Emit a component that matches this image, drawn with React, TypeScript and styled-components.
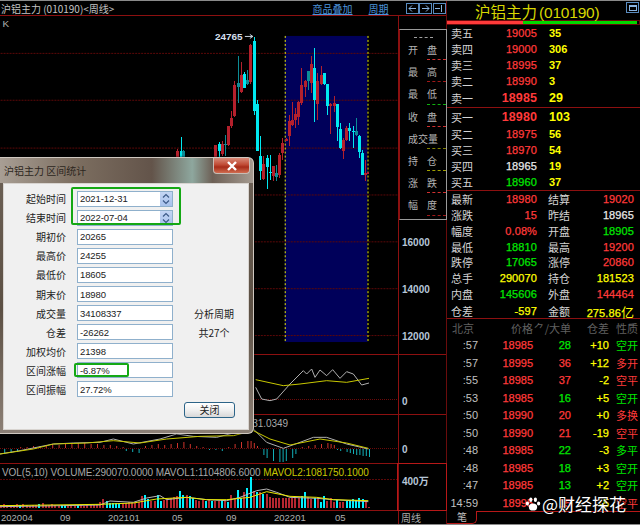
import React from 'react';
import styled, { createGlobalStyle } from 'styled-components';

const GlobalStyle = createGlobalStyle`
  html, body {
    margin: 0;
    padding: 0;
    background: #000;
    overflow: hidden;
  }
  * {
    box-sizing: border-box;
  }
`;

const CJK = `"Noto Sans CJK SC", "Liberation Sans", sans-serif`;
const NUM = `"Liberation Sans", "Noto Sans CJK SC", sans-serif`;

const RED = '#ff3a3a';
const GREEN = '#00e600';
const YELLOW = '#ffff00';
const WHITE = '#e8e8e8';
const LINE = '#8c1010';

type Tone = 'r' | 'g' | 'y' | 'w';
const toneColor = { r: RED, g: GREEN, y: YELLOW, w: WHITE };

const Page = styled.div`
  position: relative;
  width: 640px;
  height: 525px;
  display: flex;
  background: #000;
  border-top: 1px solid #8a8a8a;
  border-bottom: 1px solid #8a8a8a;
  overflow: hidden;
  font-family: ${NUM};
`;

const LeftPane = styled.div`
  width: 446px;
  flex: none;
  display: flex;
  flex-direction: column;
`;

const TitleBar = styled.div`
  height: 15px;
  flex: none;
  display: flex;
  align-items: center;
  padding-left: 1px;
  border-bottom: 1px solid ${LINE};
  font: 10px ${CJK};
  color: #c4c4c4;
  white-space: nowrap;
`;

const TitleLinks = styled.div`
  margin-left: auto;
  display: flex;
  align-items: center;
  color: #4c94dc;
  text-decoration: underline;
`;

const LinkText = styled.span<{ $gap: number }>`
  margin-right: ${p => p.$gap}px;
`;

const NavButton = styled.div`
  width: 13px;
  height: 11px;
  border: 1px solid #5a8cc0;
  color: #8ab4e0;
  display: flex;
  align-items: center;
  justify-content: center;
  margin-right: 0.5px;
`;

const ChartRow = styled.div<{ $h: number }>`
  position: relative;
  height: ${p => p.$h}px;
  flex: none;
  display: flex;
  border-bottom: 1px solid ${LINE};
`;

const Plot = styled.svg`
  width: 398px;
  height: 100%;
  flex: none;
  display: block;
`;

const AxisCell = styled.div<{ $top: number; $strong?: boolean }>`
  flex: 1;
  padding: ${p => p.$top}px 0 0 3px;
  border-left: 1px solid ${LINE};
  outline: ${p => (p.$strong ? '1px solid #b81818' : 'none')};
  font: 10px ${NUM};
  color: #b6c6d8;
`;

const AxisLabel = styled.div<{ $pitch: number }>`
  height: ${p => p.$pitch}px;
  line-height: 14px;
  font-weight: bold;
`;

const Legend = styled.div<{ $width?: number }>`
  position: absolute;
  top: 3px;
  left: 2px;
  width: ${p => (p.$width ? `${p.$width}px` : 'auto')};
  font: 10px ${NUM};
  letter-spacing: -0.05px;
  color: #a8a8a8;
  white-space: nowrap;
  text-align: right;
`;

const LegendOlive = styled.span`
  color: #c8c800;
`;

const DateRow = styled.div`
  flex: 1;
  display: flex;
`;

const DateSvg = styled.svg`
  width: 398px;
  height: 100%;
  display: block;
`;

const PeriodCell = styled.div`
  flex: 1;
  padding-left: 2px;
  border-left: 1px solid ${LINE};
  font: 10px/13px ${CJK};
  color: #b0b0b0;
`;

/* ohlc side panel over the price axis */
const InfoPanel = styled.div`
  position: absolute;
  left: 399px;
  top: 28px;
  width: 48px;
  height: 191px;
  padding-top: 7px;
  background: #000;
  border: 1px solid #9a9a9a;
  border-left-color: ${LINE};
`;

const InfoDash = styled.div`
  width: 19px;
  height: 1px;
  margin: 0 0 0 14px;
  border-top: 1px dashed #a0a0a0;
`;

const InfoRow = styled.div<{ $line: string }>`
  position: relative;
  height: 22.2px;
  padding: 6px 9px 0 8px;
  display: flex;
  justify-content: space-between;
  font: 10px/12px ${CJK};
  color: #b4b4b4;

  &::after {
    content: '';
    position: absolute;
    left: 27px;
    right: 0;
    bottom: 0;
    border-bottom: 1px dashed ${p => p.$line};
  }
`;

const Dialog = styled.div`
  position: absolute;
  left: 0;
  top: 156px;
  width: 254px;
  height: 277px;
  display: flex;
  flex-direction: column;
  padding: 0 4px 3px 3px;
  border: 1px solid #cfc8c0;
  border-left: none;
  border-radius: 0 6px 6px 0;
  background:
    linear-gradient(90deg, #a89e94 0%, #7c6e60 30%, #63544a 60%, #8ea79e 76%, #6d6056 84%, #a49a90 100%) top / 100% 25px no-repeat,
    linear-gradient(180deg, #6d6156, #5c5044 55%, #8c8076);
  box-shadow: 0 0 2px #000;
`;

const DialogTitle = styled.div`
  height: 25px;
  flex: none;
  display: flex;
  align-items: center;
  padding-left: 1px;
  font: 10px ${CJK};
  color: #2c2620;
`;

const CloseButton = styled.div`
  position: absolute;
  top: 0;
  right: 3px;
  width: 37px;
  height: 16px;
  display: flex;
  align-items: center;
  justify-content: center;
  border: 1px solid #c8bcb4;
  border-top: none;
  border-radius: 0 0 4px 4px;
  background: linear-gradient(180deg, #d88a78 0%, #c04a34 45%, #a82c18 60%, #d06c50 100%);
`;

const DialogBody = styled.div`
  position: relative;
  flex: 1;
  padding-top: 5px;
  background: #f0f0f0;
  border: 1px solid #d8d4d0;
`;

const FormGrid = styled.div`
  display: grid;
  grid-template-columns: 62px 96px 1fr;
  grid-auto-rows: 19.1px;
  column-gap: 11px;
  align-items: center;
`;

const FieldLabel = styled.div`
  grid-column: 1;
  text-align: right;
  font: 10px ${CJK};
  color: #222;
`;

const Field = styled.div`
  grid-column: 2;
  height: 16px;
  display: flex;
  align-items: center;
  justify-content: space-between;
  padding-left: 2px;
  background: #fff;
  border: 1px solid #8fb0cc;
  font: 9.5px ${NUM};
  letter-spacing: -0.1px;
  color: #222;
`;

const Spinner = styled.div`
  width: 12px;
  height: 14px;
  display: flex;
  align-items: center;
  justify-content: center;
  background: linear-gradient(180deg, #c4d6f4, #a8c2ec);
`;

const SideNote = styled.div<{ $row: number }>`
  grid-row: ${p => p.$row};
  grid-column: 3;
  text-align: center;
  padding-right: 4px;
  font: 10px ${CJK};
  color: #222;
`;

const DialogFooter = styled.div`
  display: flex;
  justify-content: flex-end;
  margin-top: 3px;
  padding-right: 13px;
`;

const PushButton = styled.div`
  width: 51px;
  height: 16px;
  border: 1px solid #2c6488;
  border-radius: 3px;
  background: linear-gradient(180deg, #fff, #f0f0f0 50%, #d8d8d8);
  text-align: center;
  font: 10px/14px ${CJK};
  color: #222;
`;

const Highlight = styled.div<{ $l: number; $t: number; $w: number; $h: number }>`
  position: absolute;
  left: ${p => p.$l}px;
  top: ${p => p.$t}px;
  width: ${p => p.$w}px;
  height: ${p => p.$h}px;
  border: 2px solid #14a814;
  border-radius: 2px;
`;

const RightPane = styled.div`
  flex: 1;
  display: flex;
  flex-direction: column;
  border-left: 1px solid #6a0c0c;
`;

const QuoteHeader = styled.div`
  position: relative;
  height: 19px;
  flex: none;
  padding-left: 28px;
  font: 15.5px/20px ${CJK};
  color: #d8d800;
  white-space: nowrap;
`;

const HeaderCode = styled.span`
  margin-left: 2px;
  font: 15.5px ${NUM};
  letter-spacing: -0.2px;
`;

const MaxButton = styled.div`
  position: absolute;
  right: 1px;
  top: 1px;
  width: 13px;
  height: 11px;
  border: 1px solid #5a8cc0;
  display: flex;
  align-items: center;
  justify-content: center;
`;

const MaxIcon = styled.div`
  width: 8px;
  height: 6px;
  border: 1px solid #8ab4e0;
  border-top-width: 2px;
`;

const RatioBar = styled.div`
  height: 5px;
  flex: none;
  display: flex;
  border: 1px solid #6a0c0c;
  border-left: none;
`;

const RatioPart = styled.div<{ $w: number; $c: string }>`
  width: ${p => p.$w}px;
  background: ${p => p.$c};
`;

const Section = styled.div<{ $border?: boolean; $top?: number }>`
  flex: none;
  padding-top: ${p => p.$top ?? 0}px;
  border-bottom: ${p => (p.$border ? `1px solid ${LINE}` : 'none')};
`;

const QuoteRow = styled.div<{ $big?: boolean; $h?: number }>`
  height: ${p => p.$h ?? 16}px;
  display: grid;
  grid-template-columns: 41px 45px 1fr;
  align-items: center;
  padding-left: 4px;
  font-size: ${p => (p.$big ? 12.5 : 11)}px;
  font-weight: ${p => (p.$big ? 'bold' : 'normal')};
  -webkit-text-stroke: ${p => (p.$big ? 0 : 0.25)}px;
`;

const RowLabel = styled.div`
  font: 11px ${CJK};
  color: #d4d4d4;
  -webkit-text-stroke: 0;
`;

const RowValue = styled.div<{ $tone: Tone }>`
  text-align: right;
  color: ${p => toneColor[p.$tone]};
  letter-spacing: 0.1px;
`;

const RowQty = styled.div<{ $tone: Tone }>`
  padding-left: 12px;
  font-weight: bold;
  -webkit-text-stroke: 0;
  color: ${p => toneColor[p.$tone]};
`;

const StatRow = styled.div`
  height: 15.85px;
  display: grid;
  grid-template-columns: 41px 45px 11px 24px 1fr;
  align-items: center;
  padding: 0 6px 0 4px;
  font-size: 11px;
  -webkit-text-stroke: 0.25px;
  white-space: nowrap;
`;

const StatTail = styled.span`
  font: 13px ${CJK};
  -webkit-text-stroke: 0;
`;

const TickHeader = styled.div`
  height: 17.5px;
  display: grid;
  grid-template-columns: 30px 55px 38px 38px 1fr;
  align-items: center;
  padding-left: 1px;
  font: 11px ${CJK};
  color: #606060;
  white-space: nowrap;
`;

const TickName = styled.div`
  padding-left: 4px;
`;

const TickRight = styled.div`
  text-align: right;
`;

const TickHeadKind = styled.div`
  padding-left: 7px;
`;

const TickRow = styled.div`
  height: 17.5px;
  display: grid;
  grid-template-columns: 30px 55px 38px 38px 1fr;
  align-items: center;
  padding-left: 1px;
  font-size: 11px;
  white-space: nowrap;
  overflow: hidden;
`;

const TickTime = styled.div`
  text-align: right;
  color: #c0c0c0;
`;

const TickCell = styled.div<{ $tone: Tone }>`
  text-align: right;
  -webkit-text-stroke: 0.25px;
  color: ${p => toneColor[p.$tone]};
`;

const TickKind = styled.div<{ $tone: Tone }>`
  padding-left: 7px;
  font: 11px ${CJK};
  color: ${p => toneColor[p.$tone]};
`;

const TabStrip = styled.div`
  flex: 1;
  display: flex;
`;

const Tab = styled.div`
  width: 30px;
  padding-left: 10px;
  border: 1px solid #b81818;
  border-top: none;
  border-left: none;
  border-radius: 0 0 5px 0;
  font: 10px/12px ${CJK};
  color: #c0c0c0;
`;

const TabRest = styled.div`
  flex: 1;
  border-top: 1px solid #b81818;
`;

const Watermark = styled.div`
  position: absolute;
  left: 525px;
  top: 493px;
  display: flex;
  align-items: center;
  gap: 1px;
  font: 17px/20px ${CJK};
  color: #fff;
  text-shadow: 0 0 2px #000;
  white-space: nowrap;
`;

// x / y read from a 3x crop of the chart, starting at (170, 25)
const candles: [number, number, number, number, number, string][] = [
  [22, 372, 400, 378, 400, 'r'], [32, 337, 400, 380, 400, 'c'], [40, 376, 400, 380, 400, 'd'],
  [136, 362, 400, 362, 400, 'r'], [146, 352, 400, 357, 378, 'c'], [155, 350, 395, 358, 388, 'r'],
  [165, 330, 395, 357, 362, 'd'], [175, 303, 365, 305, 362, 'r'], [184, 260, 310, 280, 303, 'r'],
  [193, 170, 278, 180, 275, 'r'], [203, 93, 235, 176, 188, 'd'], [213, 112, 205, 150, 203, 'r'],
  [222, 140, 190, 147, 190, 'c'], [232, 135, 180, 165, 178, 'd'], [241, 58, 178, 60, 172, 'r'],
  [251, 35, 270, 47, 260, 'c'], [261, 225, 380, 237, 378, 'c'], [270, 333, 465, 393, 438, 'c'],
  [280, 395, 465, 418, 463, 'r'], [290, 390, 495, 400, 428, 'c'], [299, 392, 465, 442, 445, 'c'],
  [309, 423, 470, 423, 455, 'r'], [318, 420, 470, 445, 458, 'd'], [328, 385, 460, 390, 450, 'r'],
  [337, 340, 405, 355, 385, 'r'], [347, 340, 350, 342, 350, 'r'], [356, 270, 365, 290, 335, 'r'],
  [366, 232, 305, 285, 300, 'r'], [376, 250, 310, 268, 285, 'r'], [385, 230, 300, 232, 277, 'r'],
  [394, 130, 240, 180, 235, 'r'], [404, 165, 218, 168, 187, 'r'], [414, 138, 197, 138, 170, 'd'],
  [423, 93, 205, 118, 175, 'r'], [433, 70, 293, 128, 225, 'c'], [442, 145, 285, 170, 237, 'r'],
  [452, 124, 180, 150, 178, 'r'], [462, 145, 180, 145, 178, 'c'], [472, 178, 270, 178, 243, 'c'],
  [481, 235, 328, 237, 243, 'r'], [491, 213, 262, 235, 243, 'r'], [500, 237, 350, 237, 308, 'c'],
  [510, 295, 372, 312, 370, 'c'], [520, 340, 402, 345, 378, 'r'], [529, 305, 350, 309, 345, 'r'],
  [538, 295, 350, 310, 318, 'c'], [548, 305, 370, 318, 322, 'c'], [557, 280, 335, 320, 330, 'd'],
  [567, 330, 400, 333, 382, 'c'], [577, 375, 450, 385, 450, 'c'], [586, 405, 470, 445, 450, 'r'],
  [595, 422, 455, 442, 448, 'r'],
];

const candleColor: Record<string, string> = { r: '#b4202c', c: '#00e8f0', d: '#0c8c96' };

const cx = (z: number) => Math.round(170 + z / 3);
const cy = (z: number) => 25 + z / 3;

const PriceChart = () => (
  <Plot viewBox="0 16 398 339">
    <rect x="285" y="36" width="83" height="307" fill="#00005a" />
    {[53, 100, 148, 195, 242, 289, 336].map(y => (
      <line key={y} x1="0" x2="398" y1={y + 0.5} y2={y + 0.5} stroke="#5c0808" strokeDasharray="2 1" />
    ))}
    <line x1="285.5" x2="285.5" y1="36" y2="343" stroke="#e8e800" strokeDasharray="2 2" />
    <line x1="368.5" x2="368.5" y1="36" y2="343" stroke="#e8e800" strokeDasharray="2 2" />
    {candles.map(([x, hi, lo, top, bottom, c]) => (
      <g key={x} fill={candleColor[c]} shapeRendering="crispEdges">
        <rect x={cx(x)} y={cy(hi)} width="1" height={(lo - hi) / 3} />
        <rect x={cx(x) - 1} y={cy(top)} width="3" height={Math.max(1, (bottom - top) / 3)} />
      </g>
    ))}
    <text x="2" y="27" fontSize="10" fontFamily={NUM} fill="#b0b0b0">K</text>
    <text x="215" y="40" fontSize="10" fontWeight="bold" fontFamily={NUM} fill="#d4dfec">24765</text>
    <path d="M245 36.5h8M250 34.5l3 2-3 2" fill="none" stroke="#c8d4e0" />
  </Plot>
);

const toPoints = (pts: number[][], ox: number, oy: number) =>
  pts.map(([x, y]) => `${ox + x / 3},${oy + y / 3}`).join(' ');

const Line = ({ pts, ox, oy, color }: { pts: number[][]; ox: number; oy: number; color: string }) => (
  <polyline points={toPoints(pts, ox, oy)} fill="none" stroke={color} strokeWidth="1" />
);

const OscChart = () => (
  <Plot viewBox="0 356 398 59">
    <line x1="0" x2="398" y1="400.5" y2="400.5" stroke="#6a0a0a" strokeDasharray="1 1" />
    <Line
      ox={250}
      oy={170}
      color="#b0b0b0"
      pts={[[17, 655], [35, 690], [60, 695], [80, 690], [120, 645], [160, 605], [170, 615], [185, 600], [195, 625], [210, 603], [230, 620], [248, 602], [270, 628], [290, 608], [310, 615], [335, 648], [357, 642]]}
    />
    <Line
      ox={250}
      oy={170}
      color="#c8c800"
      pts={[[17, 632], [100, 650], [150, 645], [230, 635], [290, 640], [357, 628]]}
    />
  </Plot>
);

const macdBars: [number, number][] = [
  [1, -5], [3, -4], [5, -3], [6, 1], [8, 1], [10, 2], [12, 2], [14, 3], [16, 4], [18, 3], [20, 5], [22, 5], [24, 5], [26, 5], [28, 4],
  [30, 4], [32, 3], [34, 3], [36, 2], [38, 1], [39, -2], [41, -3], [43, -4], [45, 2], [47, 3], [49, 4], [51, 3], [53, 4], [55, 5], [57, 6],
  [59, 4], [61, 2], [63, 1], [65, -1], [67, -1], [69, -2], [71, 1], [73, 4], [75, 6], [77, 7], [78, 7], [79, 5], [80, 2],
  [82, -6], [83, -9], [85, -12], [87, -13], [88, -13], [89, -12], [91, -9], [92, -5], [94, 1], [96, 2], [98, 3], [100, 4], [102, 5], [103, 4], [104, 3],
  [105, -1], [106, -2], [108, -3], [109, -4], [110, -5], [111, -6], [112, -6], [113, -7], [114, -7], [115, -8],
];

const MacdChart = () => (
  <Plot viewBox="0 416 398 48">
    <line x1="0" x2="398" y1="449.5" y2="449.5" stroke="#6a0a0a" strokeDasharray="1 1" />
    {macdBars.map(([i, v]) => (
      <rect
        key={i}
        x={1 + i * 3.2}
        y={v > 0 ? 449 - v : 450}
        width="1"
        height={Math.abs(v)}
        fill={v > 0 ? '#d0342c' : '#12b0b8'}
      />
    ))}
    <Line
      ox={0}
      oy={430}
      color="#b0b0b0"
      pts={[[0, 75], [60, 65], [160, 45], [220, 42], [300, 40], [340, 30], [400, 45], [480, 30], [530, 15], [580, 22], [650, 25], [700, 12], [760, 0], [800, 40], [850, 58], [900, 40], [940, 25], [980, 25], [1040, 45], [1105, 60]]}
    />
    <Line
      ox={0}
      oy={430}
      color="#c8c800"
      pts={[[0, 75], [100, 60], [160, 45], [260, 42], [340, 35], [420, 42], [500, 30], [600, 22], [700, 20], [760, 5], [810, 30], [870, 48], [960, 30], [1040, 42], [1105, 58]]}
    />
  </Plot>
);

const volHeights = [
  3, 4, 3, 2, 3, 4, 3, 4, 3, 2, 3, 3, 4, 5, 3, 3, 4, 3, 2, 3, 3, 3, 3, 2, 3, 3, 2, 3, 3, 3, 4, 6, 9, 7, 5, 5, 5, 5, 5, 5,
  6, 5, 5, 6, 12, 13, 9, 7, 7, 13, 7, 8, 9, 10, 11, 12, 17, 13, 13, 12, 10, 8, 7, 8, 7, 8, 7, 7, 7, 8, 7, 6, 13, 9, 18, 10, 16, 20, 31, 17, 16, 16, 14, 14,
  11, 10, 10, 10, 10, 10, 10, 10, 10, 10, 12, 16, 11, 9, 10, 9, 6, 12, 7, 10, 6, 8, 6, 6, 7, 8, 9, 8, 10, 9, 7, 1,
];
const volCyan = new Set([6, 12, 19, 20, 24, 33, 34, 35, 36, 37, 45, 46, 49, 50, 56, 57, 59, 60, 64, 66, 69, 71, 74, 75, 77, 78, 80, 82, 94, 95, 98, 100, 101, 105, 108, 109, 110, 111, 112, 113]);

const VolumeChart = () => (
  <Plot viewBox="0 465 398 46">
    <line x1="0" x2="398" y1="480.5" y2="480.5" stroke="#5c0808" strokeDasharray="2 1" />
    <g shapeRendering="crispEdges">
      {volHeights.map((h, i) => (
        <rect
          key={i}
          x={Math.round(i * 3.2)}
          y={509 - h}
          width="2.4"
          height={h}
          fill={volCyan.has(i) ? '#00f0ff' : '#b42630'}
        />
      ))}
    </g>
    <Line
      ox={0}
      oy={430}
      color="#b8b8b8"
      pts={[[0, 233], [300, 228], [330, 216], [400, 220], [440, 207], [480, 200], [500, 212], [560, 205], [620, 212], [680, 215], [720, 205], [770, 185], [800, 180], [830, 190], [870, 205], [950, 208], [1000, 212], [1105, 218]]}
    />
    <Line
      ox={0}
      oy={430}
      color="#e8e800"
      pts={[[0, 230], [300, 226], [400, 222], [470, 210], [560, 205], [620, 212], [680, 212], [750, 205], [800, 188], [870, 202], [950, 205], [1000, 212], [1105, 215]]}
    />
  </Plot>
);

const dateLabels = [
  ['202004', 1], ['09', 60], ['202101', 108], ['05', 172], ['09', 226], ['202201', 274], ['05', 335],
] as const;

const DateAxis = () => (
  <DateSvg viewBox="0 0 398 13">
    {dateLabels.map(([text, x]) => (
      <text key={x} x={x} y="10" fontSize="9.5" fontFamily={NUM} fill="#b0b0b0">{text}</text>
    ))}
  </DateSvg>
);

const infoRows: [string, string][] = [
  ['开盘', '#d03030'], ['最高', '#a01818'], ['最低', '#10b010'], ['收盘', '#d03030'],
  ['成交量', '#808000'], ['持仓', '#a0a000'], ['涨跌', '#d03030'], ['幅度', '#a01818'],
];

const Chevrons = () => (
  <svg width="8" height="12" viewBox="0 0 8 12">
    <path d="M1 4.5L4 1.5 7 4.5M1 7.5L4 10.5 7 7.5" fill="none" stroke="#3c5a88" strokeWidth="1.2" />
  </svg>
);

const formRows: [string, string, boolean?][] = [
  ['起始时间', '2021-12-31', true],
  ['结束时间', '2022-07-04', true],
  ['期初价', '20265'],
  ['最高价', '24255'],
  ['最低价', '18605'],
  ['期末价', '18980'],
  ['成交量', '34108337'],
  ['仓差', '-26262'],
  ['加权均价', '21398'],
  ['区间涨幅', '-6.87%'],
  ['区间振幅', '27.72%'],
];

const StatsDialog = () => (
  <Dialog>
    <DialogTitle>沪铝主力 区间统计</DialogTitle>
    <CloseButton>
      <svg width="12" height="10" viewBox="0 0 12 10">
        <path d="M2 1l8 8M10 1L2 9" stroke="#fff" strokeWidth="2.4" />
      </svg>
    </CloseButton>
    <DialogBody>
      <FormGrid>
        <SideNote $row={7}>分析周期</SideNote>
        <SideNote $row={8}>共27个</SideNote>
        {formRows.map(([label, value, spin]) => (
          <React.Fragment key={label}>
            <FieldLabel>{label}</FieldLabel>
            <Field>
              {value}
              {spin && (
                <Spinner>
                  <Chevrons />
                </Spinner>
              )}
            </Field>
          </React.Fragment>
        ))}
      </FormGrid>
      <DialogFooter>
        <PushButton>关闭</PushButton>
      </DialogFooter>
      <Highlight $l={67} $t={3} $w={110} $h={38} />
      <Highlight $l={70} $t={179} $w={55} $h={14} />
    </DialogBody>
  </Dialog>
);

const sells: [string, string, string, Tone][] = [
  ['卖五', '19005', '35', 'r'],
  ['卖四', '19000', '306', 'r'],
  ['卖三', '18995', '37', 'r'],
  ['卖二', '18990', '3', 'r'],
  ['卖一', '18985', '29', 'r'],
];

const buys: [string, string, string, Tone][] = [
  ['买一', '18980', '103', 'r'],
  ['买二', '18975', '56', 'r'],
  ['买三', '18970', '54', 'r'],
  ['买四', '18965', '19', 'w'],
  ['买五', '18960', '37', 'g'],
];

const stats: [string, string, Tone, string, string, Tone, string?][] = [
  ['最新', '18980', 'r', '结算', '19020', 'r'],
  ['涨跌', '15', 'r', '昨结', '18965', 'w'],
  ['幅度', '0.08%', 'r', '开盘', '18905', 'g'],
  ['最低', '18810', 'g', '最高', '19200', 'r'],
  ['跌停', '17065', 'g', '涨停', '20860', 'r'],
  ['总手', '290070', 'y', '持仓', '181523', 'y'],
  ['内盘', '145606', 'g', '外盘', '144464', 'r'],
  ['仓差', '-597', 'y', '金额', '275.86', 'y', '亿'],
];

const ticks: [string, string, string, Tone, string, string, Tone][] = [
  [':57', '18985', '28', 'g', '+10', '空开', 'g'],
  [':57', '18995', '36', 'r', '+12', '多开', 'r'],
  [':55', '18985', '37', 'r', '-2', '空平', 'r'],
  [':53', '18985', '16', 'g', '+5', '空开', 'g'],
  [':50', '18990', '20', 'r', '+0', '多换', 'r'],
  [':50', '18990', '21', 'r', '-19', '空平', 'r'],
  [':48', '18985', '22', 'g', '-3', '多平', 'g'],
  [':48', '18985', '18', 'g', '+3', '空开', 'g'],
  [':47', '18985', '13', 'g', '+2', '空开', 'g'],
  ['14:59', '18995', '15', 'r', '-5', '空平', 'r'],
];

const QuotePanel = () => (
  <RightPane>
    <QuoteHeader>
      沪铝主力<HeaderCode>(010190)</HeaderCode>
      <MaxButton>
        <MaxIcon />
      </MaxButton>
    </QuoteHeader>
    <RatioBar>
      <RatioPart $w={76} $c="#ff3a3a" />
      <RatioPart $w={114} $c="#00d800" />
    </RatioBar>
    <Section $border>
      {sells.map(([label, price, qty, tone], i) => (
        <QuoteRow key={label} $big={i === 4} $h={i === 4 ? 17.5 : 16}>
          <RowLabel>{label}</RowLabel>
          <RowValue $tone={tone}>{price}</RowValue>
          <RowQty $tone="y">{qty}</RowQty>
        </QuoteRow>
      ))}
    </Section>
    <Section $border $top={1}>
      {buys.map(([label, price, qty, tone], i) => (
        <QuoteRow key={label} $big={i === 0} $h={i === 0 ? 17.5 : 16}>
          <RowLabel>{label}</RowLabel>
          <RowValue $tone={tone}>{price}</RowValue>
          <RowQty $tone="y">{qty}</RowQty>
        </QuoteRow>
      ))}
    </Section>
    <Section $border>
      {stats.map(([l1, v1, t1, l2, v2, t2, unit]) => (
        <StatRow key={l1}>
          <RowLabel>{l1}</RowLabel>
          <RowValue $tone={t1}>{v1}</RowValue>
          <span />
          <RowLabel>{l2}</RowLabel>
          <RowValue $tone={t2}>
            {v2}
            {unit && <StatTail>{unit}</StatTail>}
          </RowValue>
        </StatRow>
      ))}
    </Section>
    <Section>
      <TickHeader>
        <TickName>北京</TickName>
        <TickRight>价格</TickRight>
        <TickRight>⺈/大单</TickRight>
        <TickRight>仓差</TickRight>
        <TickHeadKind>性质</TickHeadKind>
      </TickHeader>
      {ticks.map(([time, price, qty, qtyTone, diff, kind, kindTone], i) => (
        <TickRow key={i}>
          <TickTime>{time}</TickTime>
          <TickCell $tone="r">{price}</TickCell>
          <TickCell $tone={qtyTone}>{qty}</TickCell>
          <TickCell $tone="y">{diff}</TickCell>
          <TickKind $tone={kindTone}>{kind}</TickKind>
        </TickRow>
      ))}
    </Section>
    <TabStrip>
      <Tab>笔</Tab>
      <TabRest />
    </TabStrip>
  </RightPane>
);

const App: React.FC = () => (
  <>
    <GlobalStyle />
    <Page>
      <LeftPane>
        <TitleBar>
          沪铝主力 (010190)&lt;周线&gt;
          <TitleLinks>
            <LinkText $gap={16}>商品叠加</LinkText>
            <LinkText $gap={17}>周期</LinkText>
            <NavButton>
              <svg width="9" height="7" viewBox="0 0 9 7"><path d="M8 3.5H1M4 .5l-3 3 3 3" fill="none" stroke="#8ab4e0" /></svg>
            </NavButton>
            <NavButton>
              <svg width="9" height="7" viewBox="0 0 9 7"><path d="M1 3.5h7M5 .5l3 3-3 3" fill="none" stroke="#8ab4e0" /></svg>
            </NavButton>
            <NavButton>
              <svg width="9" height="7" viewBox="0 0 9 7"><path d="M0 3.5h5M6.5 0v7" fill="none" stroke="#8ab4e0" /></svg>
            </NavButton>
          </TitleLinks>
        </TitleBar>
        <ChartRow $h={339}>
          <PriceChart />
          <AxisCell $top={220}>
            {['16000', '14000', '12000'].map(v => (
              <AxisLabel key={v} $pitch={47}>{v}</AxisLabel>
            ))}
          </AxisCell>
        </ChartRow>
        <ChartRow $h={60}>
          <OscChart />
          <AxisCell $top={40}>
            <AxisLabel $pitch={14}>0</AxisLabel>
          </AxisCell>
        </ChartRow>
        <ChartRow $h={49}>
          <MacdChart />
          <AxisCell $top={28}>
            <AxisLabel $pitch={14}>0</AxisLabel>
          </AxisCell>
          <Legend $width={286}>MACD(12,26,9) DEA:1131.0349</Legend>
        </ChartRow>
        <ChartRow $h={47}>
          <VolumeChart />
          <AxisCell $top={11} $strong>
            <AxisLabel $pitch={14}>400万</AxisLabel>
          </AxisCell>
          <Legend>
            VOL(5,10) VOLUME:290070.0000 MAVOL1:1104806.6000 <LegendOlive>MAVOL2:1081750.1000</LegendOlive>
          </Legend>
        </ChartRow>
        <DateRow>
          <DateAxis />
          <PeriodCell>周线</PeriodCell>
        </DateRow>
      </LeftPane>
      <QuotePanel />
      <InfoPanel>
        <InfoDash />
        {infoRows.map(([label, color]) => (
          <InfoRow key={label} $line={color}>
            {Array.from(label).map(ch => (
              <span key={ch}>{ch}</span>
            ))}
          </InfoRow>
        ))}
      </InfoPanel>
      <StatsDialog />
      <Watermark>
        <svg width="16" height="16" viewBox="0 0 16 16" fill="#fff">
          <ellipse cx="8" cy="11" rx="4.2" ry="3.6" />
          <ellipse cx="2.4" cy="7.5" rx="1.6" ry="2" />
          <ellipse cx="5.8" cy="3.8" rx="1.6" ry="2.2" />
          <ellipse cx="10.4" cy="3.8" rx="1.6" ry="2.2" />
          <ellipse cx="13.6" cy="7.5" rx="1.6" ry="2" />
        </svg>
        @财经探花
      </Watermark>
    </Page>
  </>
);

export default App;
